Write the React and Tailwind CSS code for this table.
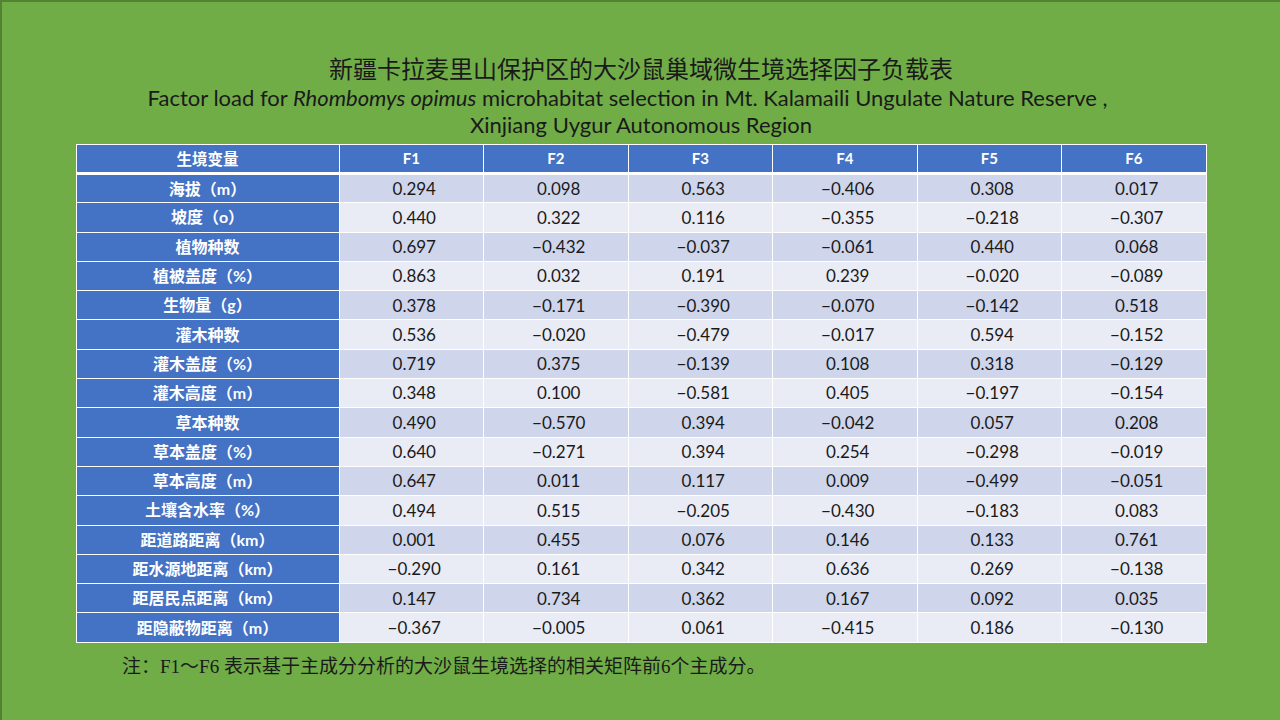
const rows = [
  ["海拔（m）", "0.294", "0.098", "0.563", "−0.406", "0.308", "0.017"],
  ["坡度（o）", "0.440", "0.322", "0.116", "−0.355", "−0.218", "−0.307"],
  ["植物种数", "0.697", "−0.432", "−0.037", "−0.061", "0.440", "0.068"],
  ["植被盖度（%）", "0.863", "0.032", "0.191", "0.239", "−0.020", "−0.089"],
  ["生物量（g）", "0.378", "−0.171", "−0.390", "−0.070", "−0.142", "0.518"],
  ["灌木种数", "0.536", "−0.020", "−0.479", "−0.017", "0.594", "−0.152"],
  ["灌木盖度（%）", "0.719", "0.375", "−0.139", "0.108", "0.318", "−0.129"],
  ["灌木高度（m）", "0.348", "0.100", "−0.581", "0.405", "−0.197", "−0.154"],
  ["草本种数", "0.490", "−0.570", "0.394", "−0.042", "0.057", "0.208"],
  ["草本盖度（%）", "0.640", "−0.271", "0.394", "0.254", "−0.298", "−0.019"],
  ["草本高度（m）", "0.647", "0.011", "0.117", "0.009", "−0.499", "−0.051"],
  ["土壤含水率（%）", "0.494", "0.515", "−0.205", "−0.430", "−0.183", "0.083"],
  ["距道路距离（km）", "0.001", "0.455", "0.076", "0.146", "0.133", "0.761"],
  ["距水源地距离（km）", "−0.290", "0.161", "0.342", "0.636", "0.269", "−0.138"],
  ["距居民点距离（km）", "0.147", "0.734", "0.362", "0.167", "0.092", "0.035"],
  ["距隐蔽物距离（m）", "−0.367", "−0.005", "0.061", "−0.415", "0.186", "−0.130"],
];

const heads = ["F1", "F2", "F3", "F4", "F5", "F6"];

export default function App() {
  return (
    <div className="w-[1280px] h-[720px] bg-[#70ad47] border-t-2 border-l-2 border-[#548235] flex flex-col items-center overflow-hidden">
      <div className="pt-[50px] flex flex-col items-center text-[#1a1a1a] font-['Lato','Noto_Sans_CJK_SC',sans-serif]">
        <h1 className="text-[24px] leading-[32px] font-['Noto_Sans_CJK_SC',sans-serif] font-normal">
          新疆卡拉麦里山保护区的大沙鼠巢域微生境选择因子负载表
        </h1>
        <p className="text-[22px] leading-[27px] pr-[27px]">
          Factor load for <i>Rhombomys opimus</i> microhabitat selection in Mt. Kalamaili Ungulate Nature Reserve ,
        </p>
        <p className="text-[22px] leading-[27px]">Xinjiang Uygur Autonomous Region</p>
      </div>

      <table className="mt-[6px] w-[1131px] table-fixed border-collapse font-['Lato','Noto_Sans_CJK_SC',sans-serif]">
        <colgroup>
          <col className="w-[263px]" />
          {heads.map((h) => (
            <col key={h} />
          ))}
        </colgroup>
        <thead>
          <tr className="bg-[#4472c4] text-white h-[29px]">
            <th className="border border-white border-b-[3px] text-[15.5px] font-bold font-['Noto_Sans_CJK_SC',sans-serif]">
              生境变量
            </th>
            {heads.map((h) => (
              <th key={h} className="border border-white border-b-[3px] text-[15px] font-bold">
                {h}
              </th>
            ))}
          </tr>
        </thead>
        <tbody>
          {rows.map((r, i) => (
            <tr key={r[0]} className={`h-[29.3px] ${i % 2 === 0 ? "bg-[#cfd5ea]" : "bg-[#e9ebf5]"}`}>
              <td className="bg-[#4472c4] border border-white text-center text-white text-[16px] font-bold">
                {r[0]}
              </td>
              {r.slice(1).map((v, j) => (
                <td key={j} className="border border-white text-center text-[17px] text-[#1a1a1a] pl-[6px]">
                  {v}
                </td>
              ))}
            </tr>
          ))}
        </tbody>
      </table>

      <p className="self-start ml-[120px] mt-[12px] text-[19px] leading-[24px] text-[#1a1a1a] font-['Liberation_Serif','Noto_Sans_CJK_SC',serif]">
        注：F1～F6 表示基于主成分分析的大沙鼠生境选择的相关矩阵前6个主成分。
      </p>
    </div>
  );
}
